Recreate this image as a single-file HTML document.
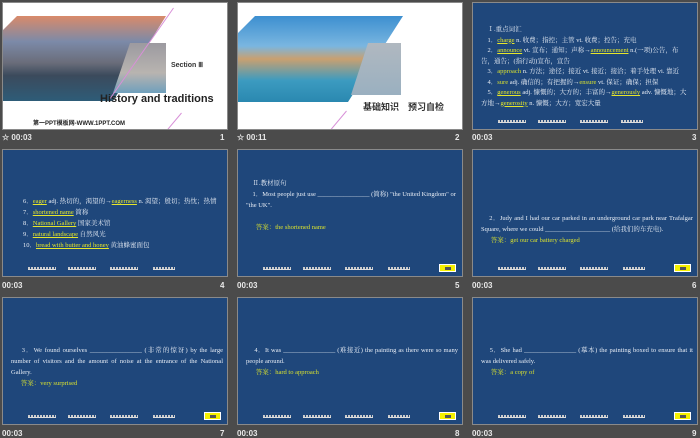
<!DOCTYPE html>
<html><head><meta charset="utf-8"><style>
*{margin:0;padding:0;box-sizing:border-box}
body{width:700px;height:438px;background:#4b4b4b;position:relative;overflow:hidden;font-family:"Liberation Serif","Noto Serif CJK SC",serif;}
.s{position:absolute;width:226px;height:128px;background:#1f477b;border:1px solid #8a8a8a;overflow:hidden}
.w{background:#fff}
.lb{position:absolute;font:bold 8px "Liberation Sans",sans-serif;color:#e8e8e8}
.t{position:absolute;color:#e6ecf5;font-size:6.5px;line-height:10.5px}
.y{color:#e6e62a;text-decoration:underline}
.g{color:#d8e030}
.ft{position:absolute;bottom:6px;height:3px;border-bottom:1px solid #ddd;background:repeating-linear-gradient(90deg,#ccc 0 2px,transparent 2px 3px);width:28px}
.btn{position:absolute;right:6px;bottom:4px;width:17px;height:8px;background:#f5f000;border:1px solid #fff}
.btn:after{content:"";position:absolute;left:5px;top:2px;width:6px;height:3px;background:#555}
</style></head><body>

<!-- slide 1 -->
<div class="s w" style="left:2px;top:2px">
<div style="position:absolute;left:0;top:13px;width:163px;height:85px;clip-path:polygon(14px 0,163px 0,110px 85px,0 85px,0 14px);background:linear-gradient(180deg,#d98a6a 0%,#7c8aa8 30%,#6a6d7a 55%,#3b4a5c 70%,#2e5c78 100%)"></div>
<div style="position:absolute;left:110px;top:40px;width:53px;height:50px;clip-path:polygon(17px 0,53px 0,53px 50px,0 50px);background:linear-gradient(#9c9aa0,#b8b4b0 60%,#6fa0bc)"></div>
<div style="position:absolute;left:170px;top:5px;width:1px;height:112px;background:#d890d8;transform:rotate(35deg);transform-origin:top"></div>
<div style="position:absolute;left:178px;top:110px;width:1px;height:22px;background:#d890d8;transform:rotate(40deg);transform-origin:top"></div>
<div style="position:absolute;left:168px;top:58px;font:bold 7px 'Liberation Sans',sans-serif;color:#333">Section Ⅲ</div>
<div style="position:absolute;left:97px;top:90px;font:bold 11px 'Liberation Sans',sans-serif;color:#222">History and traditions</div>
<div style="position:absolute;left:30px;top:115px;font:bold 6px 'Liberation Sans','Noto Sans CJK SC',sans-serif;color:#222">第一PPT模板网-WWW.1PPT.COM</div>
</div>
<div class="lb" style="left:2px;top:133px">☆ 00:03</div><div class="lb" style="left:220px;top:133px">1</div>

<!-- slide 2 -->
<div class="s w" style="left:237px;top:2px">
<div style="position:absolute;left:0;top:13px;width:165px;height:86px;clip-path:polygon(17px 0,165px 0,110px 86px,0 86px,0 17px);background:linear-gradient(180deg,#3d8fd0 0%,#7ab6e0 35%,#c9a070 50%,#3c9bc0 75%,#2a88b0 100%)"></div>
<div style="position:absolute;left:113px;top:40px;width:50px;height:52px;background:linear-gradient(#b0b8c0,#9ab0c0);clip-path:polygon(17px 0,50px 0,50px 52px,0 52px)"></div>
<div style="position:absolute;left:108px;top:108px;width:1px;height:24px;background:#d890d8;transform:rotate(40deg);transform-origin:top"></div>
<div style="position:absolute;left:125px;top:97px;font:bold 9px 'Liberation Sans','Noto Sans CJK SC',sans-serif;color:#333">基础知识　预习自检</div>
</div>
<div class="lb" style="left:237px;top:133px">☆ 00:11</div><div class="lb" style="left:455px;top:133px">2</div>

<!-- slide 3 -->
<div class="s" style="left:472px;top:2px">
<div class="t" style="left:8px;top:22px;width:210px">
&nbsp;&nbsp;&nbsp;&nbsp;Ⅰ.重点词汇<br>
&nbsp;&nbsp;&nbsp;&nbsp;1．<span class="y">charge</span> n. 收费；指控；主管 vt. 收费；控告；充电<br>
&nbsp;&nbsp;&nbsp;&nbsp;2．<span class="y">announce</span> vt. 宣布；通知；声称→<span class="y">announcement</span> n.(一项)公告，布告，通告；(指行动)宣布，宣告<br>
&nbsp;&nbsp;&nbsp;&nbsp;3．<span class="g">approach</span> n. 方法；途径；接近 vt. 接近；接洽；着手处理 vi. 靠近<br>
&nbsp;&nbsp;&nbsp;&nbsp;4．<span class="g">sure</span> adj. 确信的；有把握的→<span class="g">ensure</span> vt. 保证；确保；担保<br>
&nbsp;&nbsp;&nbsp;&nbsp;5．<span class="y">generous</span> adj. 慷慨的；大方的；丰富的→<span class="y">generously</span> adv. 慷慨地；大方地→<span class="y">generosity</span> n. 慷慨；大方；宽宏大量</div>
<div class="ft" style="left:25px"></div><div class="ft" style="left:65px"></div><div class="ft" style="left:107px"></div><div class="ft" style="left:148px;width:22px"></div>
</div>
<div class="lb" style="left:472px;top:133px">00:03</div><div class="lb" style="left:692px;top:133px">3</div>

<!-- slide 4 -->
<div class="s" style="left:2px;top:149px">
<div class="t" style="left:20px;top:47px;width:200px">
<div style="position:absolute;top:0;white-space:nowrap">6．<span class="y">eager</span> adj. 热切的，渴望的→<span class="y">eagerness</span> n. 渴望；殷切；热忱；热情</div>
<div style="position:absolute;top:11px;white-space:nowrap">7．<span class="y">shortened name</span> 简称</div>
<div style="position:absolute;top:22px;white-space:nowrap">8．<span class="y">National Gallery</span> 国家美术馆</div>
<div style="position:absolute;top:33px;white-space:nowrap">9．<span class="y">natural landscape</span> 自然风光</div>
<div style="position:absolute;top:44px;white-space:nowrap">10．<span class="y">bread with butter and honey</span> 黄油蜂蜜面包</div>
</div>
<div class="ft" style="left:25px"></div><div class="ft" style="left:65px"></div><div class="ft" style="left:107px"></div><div class="ft" style="left:150px;width:22px"></div>
</div>
<div class="lb" style="left:2px;top:281px">00:03</div><div class="lb" style="left:220px;top:281px">4</div>

<!-- slide 5 -->
<div class="s" style="left:237px;top:149px">
<div class="t" style="left:8px;top:28px;width:212px;line-height:11px">&nbsp;&nbsp;&nbsp;&nbsp;Ⅱ.教材原句<br>&nbsp;&nbsp;&nbsp;&nbsp;1．Most people just use ________________ (简称) "the United Kingdom" or "the UK".<br><br><span class="g">&nbsp;&nbsp;&nbsp;&nbsp;&nbsp;&nbsp;答案：the shortened name</span></div>
<div class="ft" style="left:25px"></div><div class="ft" style="left:65px"></div><div class="ft" style="left:107px"></div><div class="ft" style="left:150px;width:22px"></div>
<div class="btn"></div>
</div>
<div class="lb" style="left:237px;top:281px">00:03</div><div class="lb" style="left:455px;top:281px">5</div>

<!-- slide 6 -->
<div class="s" style="left:472px;top:149px">
<div class="t" style="left:8px;top:63px;width:212px;text-align:justify;line-height:11px">&nbsp;&nbsp;&nbsp;&nbsp;2．Judy and I had our car parked in an underground car park near Trafalgar Square, where we could ____________________ (给我们的车充电).<br><span class="g">&nbsp;&nbsp;&nbsp;&nbsp;&nbsp;&nbsp;答案：get our car battery charged</span></div>
<div class="ft" style="left:25px"></div><div class="ft" style="left:65px"></div><div class="ft" style="left:107px"></div><div class="ft" style="left:150px;width:22px"></div>
<div class="btn"></div>
</div>
<div class="lb" style="left:472px;top:281px">00:03</div><div class="lb" style="left:692px;top:281px">6</div>

<!-- slide 7 -->
<div class="s" style="left:2px;top:297px">
<div class="t" style="left:8px;top:47px;width:212px;text-align:justify;line-height:11px">&nbsp;&nbsp;&nbsp;&nbsp;3．We found ourselves ________________ (非常的惊讶) by the large number of visitors and the amount of noise at the entrance of the National Gallery.<br><span class="g">&nbsp;&nbsp;&nbsp;&nbsp;&nbsp;&nbsp;答案：very surprised</span></div>
<div class="ft" style="left:25px"></div><div class="ft" style="left:65px"></div><div class="ft" style="left:107px"></div><div class="ft" style="left:150px;width:22px"></div>
<div class="btn"></div>
</div>
<div class="lb" style="left:2px;top:429px">00:03</div><div class="lb" style="left:220px;top:429px">7</div>

<!-- slide 8 -->
<div class="s" style="left:237px;top:297px">
<div class="t" style="left:8px;top:47px;width:212px;text-align:justify;line-height:11px">&nbsp;&nbsp;&nbsp;&nbsp;4．It was ________________ (难接近) the painting as there were so many people around.<br><span class="g">&nbsp;&nbsp;&nbsp;&nbsp;&nbsp;&nbsp;答案：hard to approach</span></div>
<div class="ft" style="left:25px"></div><div class="ft" style="left:65px"></div><div class="ft" style="left:107px"></div><div class="ft" style="left:150px;width:22px"></div>
<div class="btn"></div>
</div>
<div class="lb" style="left:237px;top:429px">00:03</div><div class="lb" style="left:455px;top:429px">8</div>

<!-- slide 9 -->
<div class="s" style="left:472px;top:297px">
<div class="t" style="left:8px;top:47px;width:212px;text-align:justify;line-height:11px">&nbsp;&nbsp;&nbsp;&nbsp;5．She had ________________ (摹本) the painting boxed to ensure that it was delivered safely.<br><span class="g">&nbsp;&nbsp;&nbsp;&nbsp;&nbsp;&nbsp;答案：a copy of</span></div>
<div class="ft" style="left:25px"></div><div class="ft" style="left:65px"></div><div class="ft" style="left:107px"></div><div class="ft" style="left:150px;width:22px"></div>
<div class="btn"></div>
</div>
<div class="lb" style="left:472px;top:429px">00:03</div><div class="lb" style="left:692px;top:429px">9</div>

</body></html>
